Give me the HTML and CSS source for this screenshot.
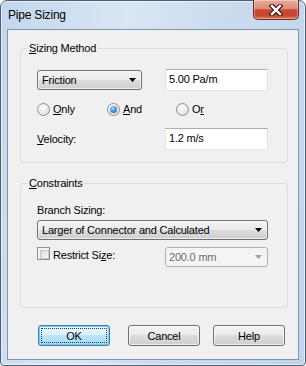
FILE: index.html
```html
<!DOCTYPE html>
<html lang="en">
<head>
    <meta charset="UTF-8">
    <title>Pipe Sizing</title>
    <link rel="stylesheet" href="styles.css">
</head>
<body>
    <div class="window">
        <!-- title bar -->
        <div class="titlebar">
            <span class="title">Pipe Sizing</span>
            <div class="close-btn">
                <svg width="16" height="12" viewBox="0 0 16 12">
                    <path d="M4 2 L12 10 M12 2 L4 10" stroke="#3a1d17" stroke-width="4.6" stroke-linecap="square"/>
                    <path d="M4 2 L12 10 M12 2 L4 10" stroke="#ffffff" stroke-width="2.4" stroke-linecap="square"/>
                </svg>
            </div>
        </div>

        <div class="client">
            <!-- sizing method -->
            <fieldset class="group group-method">
                <legend><u>S</u>izing Method</legend>
                <div class="row">
                    <div class="combo combo-method">
                        <span>Friction</span>
                        <svg class="arrow" width="7" height="4" viewBox="0 0 7 4"><polygon points="0,0 7,0 3.5,4" fill="#000"/></svg>
                    </div>
                    <div class="textbox">5.00 Pa/m</div>
                </div>
                <div class="radio-row">
                    <div class="radio-opt"><span class="radio"></span><span><u>O</u>nly</span></div>
                    <div class="radio-opt"><span class="radio checked"></span><span><u>A</u>nd</span></div>
                    <div class="radio-opt"><span class="radio"></span><span>O<u>r</u></span></div>
                </div>
                <div class="row row-velocity">
                    <span><u>V</u>elocity:</span>
                    <div class="textbox">1.2 m/s</div>
                </div>
            </fieldset>

            <!-- constraints -->
            <fieldset class="group group-constraints">
                <legend><u>C</u>onstraints</legend>
                <div class="branch-label">Branch Sizing:</div>
                <div class="combo combo-wide">
                    <span>Larger of Connector and Calculated</span>
                    <svg class="arrow" width="7" height="4" viewBox="0 0 7 4"><polygon points="0,0 7,0 3.5,4" fill="#000"/></svg>
                </div>
                <div class="row row-restrict">
                    <div class="check-opt"><span class="checkbox"></span><span>Restrict Si<u>z</u>e:</span></div>
                    <div class="combo combo-disabled">
                        <span>200.0 mm</span>
                        <svg class="arrow" width="7" height="4" viewBox="0 0 7 4"><polygon points="0,0 7,0 3.5,4" fill="#a2a2a2"/></svg>
                    </div>
                </div>
            </fieldset>

            <!-- buttons -->
            <div class="buttons">
                <div class="btn btn-default"><span>OK</span></div>
                <div class="btn btn-cancel">Cancel</div>
                <div class="btn btn-help">Help</div>
            </div>
        </div>
    </div>
</body>
</html>
```

FILE: styles.css
```css
* {
    box-sizing: border-box;
}

body {
    margin: 0;
    font-family: "Liberation Sans", Arial, sans-serif;
    font-size: 11px;
    letter-spacing: -0.2px;
    color: #000;
}

/* window frame */
.window {
    width: 306px;
    height: 366px;
    border: 1px solid #4f5f71;
    border-radius: 7px 7px 4px 4px;
    background: linear-gradient(100deg, #c3d6ec 0%, #d9e6f4 35%, #cbdcef 60%, #bfd3ea 100%);
    box-shadow: inset 0 0 0 1px rgba(255,255,255,0.55);
    display: flex;
    flex-direction: column;
}

.titlebar {
    height: 28px;
    display: flex;
    justify-content: space-between;
    align-items: flex-start;
    padding-left: 7px;
}

.title {
    font-size: 12px;
    line-height: 14px;
    margin-top: 7px;
}

.close-btn {
    width: 46px;
    height: 20px;
    margin-top: -1px;
    margin-right: 6px;
    border: 1px solid #6a2c22;
    border-top: none;
    border-radius: 0 0 5px 5px;
    background: linear-gradient(#e9ab9c 0%, #dc8b78 45%, #c84a31 52%, #c9452b 80%, #dd7a5f 100%);
    box-shadow: inset 0 0 0 1px rgba(255,255,255,0.35);
    display: flex;
    align-items: center;
    justify-content: center;
}

.client {
    flex: 1;
    margin: 0 6px 5px;
    border: 1px solid #8195ab;
    background: #f0f0f0;
}

/* group boxes */
.group {
    width: 268px;
    margin: 11px 0 0 12px;
    border: 1px solid #d5dfe5;
    border-radius: 3px;
    min-width: 0;
}

.group legend {
    margin-left: -10px;
    padding: 0 2px;
    line-height: 14px;
}

.group-method {
    padding: 14px 19px 12px 16px;
}

.group-constraints {
    margin-top: 13px;
    padding: 13px 19px 40px 16px;
}

.row {
    display: grid;
    grid-template-columns: 128px 103px;
    align-items: center;
}

.row-velocity {
    margin-top: 12px;
}

.radio-row {
    display: grid;
    grid-template-columns: 70px 69px auto;
    height: 14px;
    margin-top: 11px;
}

.radio-opt {
    display: flex;
    align-items: center;
    gap: 3px;
    line-height: 14px;
}

.radio {
    width: 13px;
    height: 13px;
    border-radius: 50%;
    border: 1px solid #8e8f8f;
    background: radial-gradient(circle at 40% 35%, #ffffff 0%, #e8e8e8 55%, #cfcfcf 100%);
    position: relative;
}

.radio.checked::after {
    content: "";
    position: absolute;
    inset: 2px;
    border-radius: 50%;
    background: radial-gradient(circle at 40% 35%, #a6dcff 0%, #3b88d3 55%, #1c5296 100%);
}

.textbox {
    height: 22px;
    border: 1px solid #abadb3;
    border-color: #abadb3 #dbdfe6 #e3e9ef #e2e3ea;
    background: #fff;
    padding: 0 3px;
    line-height: 18px;
}

/* combo boxes */
.combo {
    height: 20px;
    border: 1px solid #707070;
    border-radius: 3px;
    background: linear-gradient(#f2f2f2 0%, #ebebeb 50%, #dddddd 50%, #cfcfcf 100%);
    box-shadow: inset 0 0 0 1px rgba(255,255,255,0.6);
    display: flex;
    align-items: center;
    justify-content: space-between;
    padding: 0 5px 0 4px;
}

.combo-method {
    width: 105px;
}

.combo-wide {
    width: 231px;
    margin-top: 3px;
}

.combo-disabled {
    border-color: #adb2b5;
    background: #f4f4f4;
    box-shadow: none;
    color: #6d6d6d;
    padding-left: 3px;
}

.branch-label {
    line-height: 14px;
}

.row-restrict {
    margin-top: 7px;
    align-items: start;
}

.check-opt {
    display: flex;
    align-items: flex-start;
    gap: 3px;
    line-height: 17px;
}

.checkbox {
    width: 13px;
    height: 13px;
    margin-top: 0;
    border: 1px solid #8e8f8f;
    background: #f4f4f4;
    padding: 2px;
}

.checkbox::after {
    content: "";
    display: block;
    width: 100%;
    height: 100%;
    border: 1px solid #c3c6cb;
    background: linear-gradient(135deg, #d6d9de, #f6f6f6);
}

/* buttons */
.buttons {
    display: flex;
    margin-top: 17px;
    padding-left: 30px;
}

.btn {
    width: 72px;
    height: 21px;
    border: 1px solid #707070;
    border-radius: 3px;
    background: linear-gradient(#f2f2f2 0%, #ebebeb 50%, #dddddd 50%, #cfcfcf 100%);
    box-shadow: inset 0 0 0 1px rgba(255,255,255,0.7);
    display: flex;
    align-items: center;
    justify-content: center;
    position: relative;
}

.btn-default {
    border-color: #3c7fb1;
    background: linear-gradient(#eaf6fd 0%, #d9f0fc 50%, #bee6fd 50%, #a7d9f5 100%);
    box-shadow: inset 0 0 0 1px #6fcdf7;
}

.btn-default::after {
    content: "";
    position: absolute;
    inset: 2px;
    border: 1px dotted #333;
}

.btn-cancel {
    margin-left: 18px;
}

.btn-help {
    margin-left: 13px;
}
```
